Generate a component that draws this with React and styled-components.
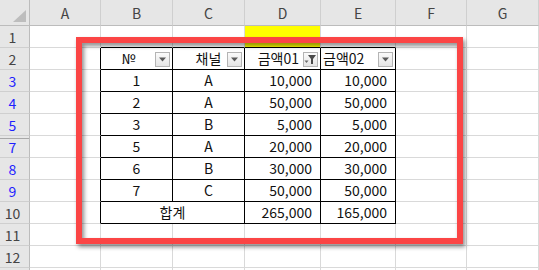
import React from "react";
import styled, { createGlobalStyle } from "styled-components";

const GlobalStyle = createGlobalStyle`
  html, body {
    margin: 0;
    padding: 0;
    background: #ffffff;
  }
  body {
    font-family: "Noto Sans CJK KR", "Noto Sans", sans-serif;
  }
`;

const GRID_LINE = "#d9d9d9";
const EDGE = "#000000";

const Wrapper = styled.div`
  position: relative;
  width: 539px;
  height: 270px;
  overflow: hidden;
  background: #ffffff;
`;

const Sheet = styled.div`
  display: grid;
  grid-template-columns: 30px 71px 72px 72px 76px 75px 71px 72px;
  grid-template-rows: 26px;
  grid-auto-rows: 22px;
  font-size: 14px;
  color: #111;
`;

const Corner = styled.div`
  box-sizing: border-box;
  background: #e6e6e6;
  border-right: 1px solid #bcbcbc;
  border-bottom: 1px solid #bcbcbc;
  display: flex;
  align-items: flex-end;
  justify-content: flex-end;
  padding: 0 3px 3px 0;
`;

const ColHeader = styled.div`
  box-sizing: border-box;
  background: #e6e6e6;
  border-right: 1px solid #cfcfcf;
  border-bottom: 1px solid #bcbcbc;
  display: flex;
  align-items: center;
  justify-content: center;
  color: #444;
  font-size: 14px;
`;

const RowHeader = styled.div`
  box-sizing: border-box;
  background: #e6e6e6;
  border-right: 1px solid #bcbcbc;
  border-bottom: 1px solid #cfcfcf;
  display: flex;
  align-items: center;
  justify-content: center;
  padding-right: 4px;
  font-size: 14px;
  color: ${(p) => (p.$filtered ? "#1f1fff" : "#444")};
  box-shadow: ${(p) =>
    p.$afterHidden ? "inset 0 2px 0 #e6e6e6, inset 0 3px 0 #a8a8a8" : "none"};
`;

const Cell = styled.div`
  box-sizing: border-box;
  grid-column: ${(p) => (p.$span ? `span ${p.$span}` : "auto")};
  background: ${(p) => p.$bg || "#ffffff"};
  border-right: 1px solid ${(p) => (p.$edgeR ? EDGE : GRID_LINE)};
  border-bottom: 1px solid ${(p) => (p.$edgeB ? EDGE : GRID_LINE)};
  display: flex;
  align-items: flex-end;
  justify-content: ${(p) =>
    p.$align === "right" ? "flex-end" : p.$align === "left" ? "flex-start" : "center"};
  padding: ${(p) => p.$pad || "0 2px 1px 2px"};
  line-height: 20px;
  white-space: nowrap;
`;

const HeadCell = styled(Cell)`
  position: relative;
`;

const FilterButton = styled.span`
  position: absolute;
  right: 2px;
  bottom: 2px;
  width: 15px;
  height: 15px;
  box-sizing: border-box;
  border: 1px solid #b4b4b4;
  background: linear-gradient(#fbfbfb, #e4e4e4);
  display: flex;
  align-items: center;
  justify-content: center;
`;

const RedFrame = styled.div`
  position: absolute;
  left: 76px;
  top: 37px;
  width: 387px;
  height: 207px;
  box-sizing: border-box;
  border: 6px solid #fb4545;
  filter: drop-shadow(2px 3px 2px rgba(0, 0, 0, 0.45));
  pointer-events: none;
`;

const Arrow = () => (
  <svg width="9" height="5" viewBox="0 0 9 5">
    <path d="M1 0.5 L8 0.5 L4.5 4.5 Z" fill="#5a5a5a" />
  </svg>
);

const Funnel = () => (
  <svg width="13" height="11" viewBox="0 0 13 11">
    <path d="M4 1 L12 1 L9 5 L9 10 L7 10 L7 5 Z" fill="#4a4a4a" />
    <path d="M0.5 6.5 L4.5 6.5 L2.5 9 Z" fill="#6a6a6a" />
  </svg>
);

const SelectAll = () => (
  <svg width="13" height="12" viewBox="0 0 13 12">
    <path d="M13 0 L13 12 L0 12 Z" fill="#bdbdbd" />
  </svg>
);

const columns = ["A", "B", "C", "D", "E", "F", "G"];

const data = [
  { row: 3, no: "1", ch: "A", a: "10,000", b: "10,000" },
  { row: 4, no: "2", ch: "A", a: "50,000", b: "50,000" },
  { row: 5, no: "3", ch: "B", a: "5,000", b: "5,000" },
  { row: 7, no: "5", ch: "A", a: "20,000", b: "20,000", afterHidden: true },
  { row: 8, no: "6", ch: "B", a: "30,000", b: "30,000" },
  { row: 9, no: "7", ch: "C", a: "50,000", b: "50,000" },
];

const NUM_PAD = "0 8px 1px 2px";

const EmptyRow = ({ n, yellowD, edgeBottom }) => (
  <>
    <RowHeader>{n}</RowHeader>
    <Cell />
    <Cell $edgeB={edgeBottom} />
    <Cell $edgeB={edgeBottom} />
    <Cell $edgeB={edgeBottom} $bg={yellowD ? "#ffff00" : undefined} />
    <Cell $edgeB={edgeBottom} />
    <Cell />
    <Cell />
  </>
);

const App = () => {
  return (
    <Wrapper>
      <GlobalStyle />
      <Sheet>
        <Corner>
          <SelectAll />
        </Corner>
        {columns.map((c) => (
          <ColHeader key={c}>{c}</ColHeader>
        ))}

        <EmptyRow n="1" yellowD edgeBottom />

        <RowHeader>2</RowHeader>
        <Cell $edgeR />
        <HeadCell $edgeR $edgeB $pad="0 18px 1px 2px">
          №
          <FilterButton>
            <Arrow />
          </FilterButton>
        </HeadCell>
        <HeadCell $edgeR $edgeB $pad="0 2px 1px 2px">
          채널
          <FilterButton>
            <Arrow />
          </FilterButton>
        </HeadCell>
        <HeadCell $edgeR $edgeB $align="right" $pad="0 21px 1px 2px">
          금액01
          <FilterButton>
            <Funnel />
          </FilterButton>
        </HeadCell>
        <HeadCell $edgeR $edgeB $align="left" $pad="0 2px 1px 2px">
          금액02
          <FilterButton>
            <Arrow />
          </FilterButton>
        </HeadCell>
        <Cell />
        <Cell />

        {data.map((d) => (
          <React.Fragment key={d.row}>
            <RowHeader $filtered $afterHidden={d.afterHidden}>
              {d.row}
            </RowHeader>
            <Cell $edgeR />
            <Cell $edgeR $edgeB>{d.no}</Cell>
            <Cell $edgeR $edgeB>{d.ch}</Cell>
            <Cell $edgeR $edgeB $align="right" $pad={NUM_PAD}>
              {d.a}
            </Cell>
            <Cell $edgeR $edgeB $align="right" $pad={NUM_PAD}>
              {d.b}
            </Cell>
            <Cell />
            <Cell />
          </React.Fragment>
        ))}

        <RowHeader>10</RowHeader>
        <Cell $edgeR />
        <Cell $span={2} $edgeR $edgeB>
          합계
        </Cell>
        <Cell $edgeR $edgeB $align="right" $pad={NUM_PAD}>
          265,000
        </Cell>
        <Cell $edgeR $edgeB $align="right" $pad={NUM_PAD}>
          165,000
        </Cell>
        <Cell />
        <Cell />

        <EmptyRow n="11" />
        <EmptyRow n="12" />
        <EmptyRow n="" />
      </Sheet>
      <RedFrame />
    </Wrapper>
  );
};

export default App;
